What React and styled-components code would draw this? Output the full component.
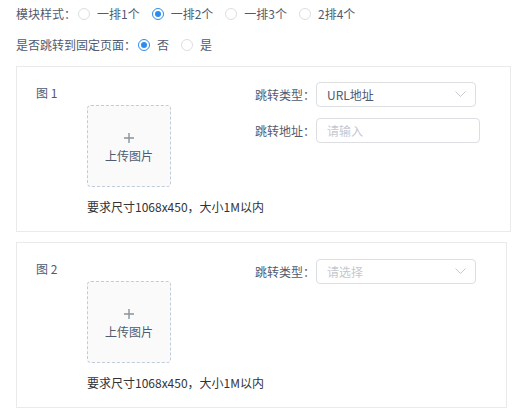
import React from "react";
import styled, { createGlobalStyle } from "styled-components";

const Global = createGlobalStyle`
  body {
    margin: 0;
    background: #fff;
    font-family: "Noto Sans CJK SC", "Noto Sans", sans-serif;
    font-size: 12px;
    color: #515a6e;
  }
`;

const Page = styled.div`
  padding: 2px 0 0 16px;
`;

const FormRow = styled.div`
  display: flex;
  align-items: center;
  height: 24px;
  margin-top: ${(p) => p.$mt || 0}px;
`;

const RowLabel = styled.span`
  line-height: 24px;
  color: #515a6e;
  margin-right: 2px;
  white-space: nowrap;
`;

const RadioItem = styled.label`
  display: inline-flex;
  align-items: center;
  margin-right: 12px;
  white-space: nowrap;
`;

const RadioCircle = styled.span`
  box-sizing: border-box;
  width: 12px;
  height: 12px;
  border-radius: 50%;
  border: 1px solid ${(p) => (p.$checked ? "#2d8cf0" : "#dcdee2")};
  display: inline-flex;
  align-items: center;
  justify-content: center;
  margin-right: 7px;
  &::after {
    content: "";
    width: 6px;
    height: 6px;
    border-radius: 50%;
    background: #2d8cf0;
    display: ${(p) => (p.$checked ? "block" : "none")};
  }
`;

const RadioText = styled.span`
  line-height: 24px;
  color: #515a6e;
`;

const Card = styled.div`
  box-sizing: border-box;
  width: ${(p) => p.$width}px;
  border: 1px solid #e8eaec;
  margin-top: ${(p) => p.$mt}px;
  padding: 16px 30px 14px 19px;
  display: flex;
  justify-content: space-between;
  align-items: flex-start;
`;

const LeftCol = styled.div`
  display: flex;
  flex-direction: column;
  width: 150px;
  flex-shrink: 0;
`;

const Title = styled.div`
  line-height: 20px;
  color: #515a6e;
`;

const UploadBox = styled.div`
  box-sizing: border-box;
  width: 84px;
  height: 82px;
  margin: 2px 0 0 51px;
  border: 1px dashed #c0ccda;
  border-radius: 4px;
  background: #fafafa;
  display: flex;
  flex-direction: column;
  align-items: center;
  padding-top: 26px;
`;

const UploadText = styled.div`
  line-height: 20px;
  margin-top: 2px;
  color: #515a6e;
`;

const Hint = styled.div`
  margin: 10px 0 0 51px;
  line-height: 20px;
  color: #333;
  white-space: nowrap;
`;

const RightCol = styled.div`
  display: flex;
  flex-direction: column;
  gap: 11px;
  flex-shrink: 0;
  margin-top: ${(p) => p.$mt || 0}px;
`;

const FormItem = styled.div`
  display: flex;
  align-items: center;
`;

const ItemLabel = styled.span`
  width: 80px;
  text-align: right;
  color: #515a6e;
  margin-right: 1px;
  white-space: nowrap;
`;

const Control = styled.div`
  box-sizing: border-box;
  width: ${(p) => p.$width}px;
  height: 25px;
  border: 1px solid #dcdee2;
  border-radius: 4px;
  padding: 0 9px 0 10px;
  display: flex;
  align-items: center;
  justify-content: space-between;
  color: ${(p) => (p.$placeholder ? "#c5c8ce" : "#515a6e")};
  background: #fff;
`;

const Chevron = () => (
  <svg width="11" height="7" viewBox="0 0 11 7">
    <polyline points="0.5,0.5 5.5,5.5 10.5,0.5" fill="none" stroke="#c5c8ce" strokeWidth="1" />
  </svg>
);

const Plus = () => (
  <svg width="12" height="12" viewBox="0 0 12 12">
    <path d="M6 1v10M1 6h10" stroke="#8c939d" strokeWidth="1.4" fill="none" />
  </svg>
);

const Radio = ({ checked, children }) => (
  <RadioItem>
    <RadioCircle $checked={checked} />
    <RadioText>{children}</RadioText>
  </RadioItem>
);

const Upload = () => (
  <UploadBox>
    <Plus />
    <UploadText>上传图片</UploadText>
  </UploadBox>
);

export default function App() {
  return (
    <>
      <Global />
      <Page>
        <FormRow>
          <RowLabel>模块样式：</RowLabel>
          <Radio>一排1个</Radio>
          <Radio checked>一排2个</Radio>
          <Radio>一排3个</Radio>
          <Radio>2排4个</Radio>
        </FormRow>
        <FormRow $mt={7}>
          <RowLabel>是否跳转到固定页面：</RowLabel>
          <Radio checked>否</Radio>
          <Radio>是</Radio>
        </FormRow>

        <Card $width={495} $mt={9}>
          <LeftCol>
            <Title>图 1</Title>
            <Upload />
            <Hint>要求尺寸1068x450，大小1M以内</Hint>
          </LeftCol>
          <RightCol $mt={-1}>
            <FormItem>
              <ItemLabel>跳转类型：</ItemLabel>
              <Control $width={160}>
                URL地址
                <Chevron />
              </Control>
            </FormItem>
            <FormItem>
              <ItemLabel>跳转地址：</ItemLabel>
              <Control $width={164} $placeholder>
                请输入
              </Control>
            </FormItem>
          </RightCol>
        </Card>

        <Card $width={491} $mt={10}>
          <LeftCol>
            <Title>图 2</Title>
            <Upload />
            <Hint>要求尺寸1068x450，大小1M以内</Hint>
          </LeftCol>
          <RightCol>
            <FormItem>
              <ItemLabel>跳转类型：</ItemLabel>
              <Control $width={160} $placeholder>
                请选择
                <Chevron />
              </Control>
            </FormItem>
          </RightCol>
        </Card>
      </Page>
    </>
  );
}
